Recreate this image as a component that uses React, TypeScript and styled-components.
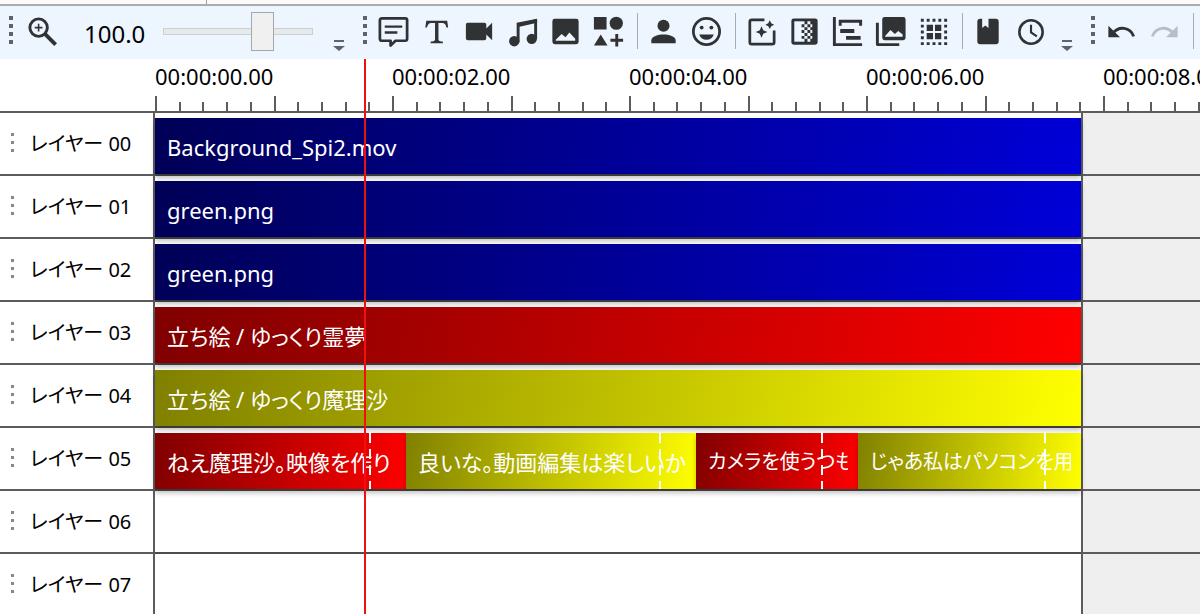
import React from "react";
import styled, { createGlobalStyle, css } from "styled-components";

const INK = "#303234";
const LINE = "#5c5c5c";

const GlobalStyle = createGlobalStyle`
  * { box-sizing: border-box; }
  body {
    margin: 0;
    background: #fff;
    color: #000;
    font-family: "Noto Sans", "Noto Sans CJK JP", sans-serif;
    font-size: 22px;
  }
`;

const Screen = styled.div`
  display: flex;
  flex-direction: column;
  height: 100vh;
  overflow: hidden;
`;

const PaneEdge = styled.div`
  flex: none;
  height: 6px;
  background: #fafafa;
  border-bottom: 2px solid #ababab;
  &::before {
    content: "";
    display: block;
    width: 206px;
    height: 4px;
    border-right: 1px solid #a0a0a0;
  }
`;

const Toolbar = styled.header`
  flex: none;
  display: flex;
  gap: 18px;
  height: 53px;
  padding-left: 9px;
  background: #edf5fe;
  overflow: hidden;
`;

const ToolGroup = styled.div`
  flex: none;
  display: flex;
  align-items: center;
  padding-bottom: 3px;
`;

const Grip = styled.span<{ $gap?: number }>`
  width: 4px;
  height: 28px;
  margin: 0 ${(p) => p.$gap ?? 5}px 2px 0;
  background: repeating-linear-gradient(#5e6368 0 4px, transparent 4px 8px);
`;

const Separator = styled.span`
  width: 1px;
  height: 36px;
  margin: 0 4px 0 7px;
  background: #a4acb4;
`;

const IconButton = styled.button`
  display: flex;
  align-items: center;
  justify-content: center;
  width: 43px;
  height: 44px;
  padding: 0;
  border: 0;
  background: none;
  color: ${INK};
  &:disabled { color: #b8bec4; }
  svg { display: block; width: 35px; height: 35px; }
`;

const OverflowButton = styled.button`
  display: flex;
  align-self: flex-end;
  width: 12px;
  height: 19px;
  margin-left: 8px;
  padding: 0;
  border: 0;
  background: none;
  color: #606468;
`;

const ZoomValue = styled.output`
  width: 66px;
  margin-left: 20px;
  padding-top: 4px;
  font-size: 24px;
`;

const ZoomSlider = styled.input`
  appearance: none;
  width: 150px;
  height: 40px;
  margin: 0 12px 0 13px;
  background: none;
  &::-webkit-slider-runnable-track {
    height: 7px;
    background: #e7eaea;
    border: 1px solid #cdd0d2;
  }
  &::-webkit-slider-thumb {
    appearance: none;
    width: 23px;
    height: 39px;
    margin-top: -17px;
    background: #f0f0f0;
    border: 1px solid #a4a8ac;
  }
`;

const Timeline = styled.main`
  position: relative;
  flex: none;
`;

const Ruler = styled.div`
  display: flex;
  height: 54px;
  padding-left: 155px;
  border-bottom: 2px solid ${LINE};
  overflow: hidden;
`;

const RulerCell = styled.div`
  flex: none;
  display: flex;
  flex-direction: column;
  justify-content: space-between;
  width: 237px;
  line-height: 34px;
`;

const Ticks = styled.div`
  display: flex;
  align-items: flex-end;
  height: 15px;
`;

const Tick = styled.span<{ $major: boolean }>`
  flex: 1;
  height: ${(p) => (p.$major ? 15 : 9)}px;
  border-left: 2px solid ${LINE};
`;

const Layer = styled.section`
  display: flex;
  height: 63px;
`;

const LayerHead = styled.div`
  flex: none;
  display: flex;
  align-items: center;
  gap: 16px;
  width: 155px;
  padding: 0 0 2px 11px;
  border-right: 2px solid ${LINE};
  border-bottom: 2px solid ${LINE};
`;

const LayerGrip = styled.span`
  width: 3px;
  height: 19px;
  background: repeating-linear-gradient(#888 0 3px, transparent 3px 8px);
`;

const jpText = css`
  font-feature-settings: "palt";
  white-space: nowrap;
`;

const LayerName = styled.span`
  ${jpText}
  font-size: 20px;
`;

const Track = styled.div`
  flex: none;
  display: flex;
  width: 926px;
  padding-top: 5px;
  border-bottom: 2px solid #4c4c4c;
`;

const Beyond = styled.div`
  flex: 1;
  background: #efefef;
  border-left: 2px solid ${LINE};
  border-bottom: 2px solid ${LINE};
`;

type Tone = "blue" | "red" | "yellow";

const tones: Record<Tone, string> = {
  blue: "#000056, #0000d8",
  red: "#800000, #ff0000",
  yellow: "#808000, #ffff00",
};

const ClipBox = styled.div<{ $tone: Tone; $length: number }>`
  position: relative;
  flex: none;
  width: ${(p) => p.$length}px;
  padding: 0 10px 0 12px;
  background: linear-gradient(100deg, ${(p) => tones[p.$tone]});
  box-shadow: 0 4px 5px rgba(0, 0, 0, 0.25);
  color: #fff;
  font-size: ${(p) => (p.$length < 250 ? 20 : 22)}px;
  line-height: 58px;
`;

const ClipText = styled.span`
  ${jpText}
  display: block;
  overflow: hidden;
`;

const VoiceEnd = styled.span<{ $at: number }>`
  position: absolute;
  top: 0;
  bottom: 0;
  left: ${(p) => p.$at}px;
  width: 2px;
  background: repeating-linear-gradient(#fff 0 10px, transparent 10px 16px);
`;

const Playhead = styled.div`
  position: absolute;
  top: 0;
  bottom: 0;
  left: 364px;
  width: 2px;
  background: #f01010;
`;

const icons: Record<string, React.ReactNode> = {
  zoom: (
    <g fill="none" stroke="currentColor">
      <circle cx="14" cy="14" r="9" strokeWidth="3" />
      <path d="M14 10v8M10 14h8" strokeWidth="1.6" />
      <path d="M20.500 20.500 31.500 31.500" strokeWidth="4" />
    </g>
  ),
  voice: (
    <g fill="none" stroke="currentColor">
      <path d="M6 4.500h24q2 0 2 2v19q0 2-2 2H20l-5 5v-5H6q-2 0-2-2v-19q0-2 2-2z" strokeWidth="2.800" strokeLinejoin="round" />
      <path d="M9 13h18M9 19h13" strokeWidth="2.400" />
    </g>
  ),
  text: (
    <path fill="currentColor" d="M7.500 7h21.500l1 7h-1.700q-.8-4.800-4.300-4.800h-4V26q0 2.200 3 2.200h1.500v1.800H12v-1.800h1.500q3 0 3-2.200V9.200h-4q-3.500 0-4.300 4.800H6.500z" />
  ),
  video: <path fill="currentColor" d="M6 9h17q2 0 2 2v4l6-6v18l-6-6v4q0 2-2 2H6q-2 0-2-2V11q0-2 2-2z" />,
  music: (
    <g fill="currentColor">
      <path d="M12 9 33 5v4L15 13v16h-3z" />
      <path d="M30 5.500h3V26h-3z" />
      <circle cx="9.500" cy="28" r="5.300" />
      <circle cx="27.500" cy="25.500" r="5.300" />
    </g>
  ),
  image: (
    <path fill="currentColor" fillRule="evenodd" d="M7 5h22q2.500 0 2.500 2.500v21q0 2.500-2.500 2.500H7q-2.500 0-2.500-2.500v-21Q4.500 5 7 5zM8 27.500h20v-2l-6-6.500-4 5-4-3.500-6 6z" />
  ),
  shapes: (
    <g fill="currentColor">
      <path d="M3 3h13v13H3zM10 21l7 11.500H3z" />
      <circle cx="26" cy="9.500" r="6.800" />
      <path d="M25 20.500h3v5h5v3h-5v5h-3v-5h-5v-3h5z" />
    </g>
  ),
  person: (
    <g fill="currentColor">
      <circle cx="18" cy="12" r="6.200" />
      <path d="M5.500 30v-3c0-4 7-6 12.500-6s12.500 2 12.500 6v3z" />
    </g>
  ),
  face: (
    <g fill="currentColor">
      <circle cx="18" cy="18" r="13.500" fill="none" stroke="currentColor" strokeWidth="2.800" />
      <circle cx="13" cy="14" r="2" />
      <circle cx="23" cy="14" r="2" />
      <path d="M10.500 21h15q-2 5.500-7.500 5.500t-7.500-5.500z" />
    </g>
  ),
  effect: (
    <g fill="currentColor">
      <path d="M21 6H8q-2 0-2 2v21q0 2 2 2h21q2 0 2-2V17" fill="none" stroke="currentColor" strokeWidth="2.800" />
      <path d="M18 12.500l1.800 4.200 4.200 1.800-4.200 1.800-1.800 4.200-1.800-4.200-4.200-1.800 4.200-1.800zM26.500 6.500l1.500 3 3 1.500-3 1.500-1.500 3-1.500-3-3-1.500 3-1.500z" />
    </g>
  ),
  transition: (
    <g>
      <path fill="currentColor" d="M7 4.500h22q2.500 0 2.500 2.500v22q0 2.500-2.500 2.500H7q-2.500 0-2.500-2.500V7q0-2.500 2.500-2.500z" />
      <path fill="#edf5fe" d="M7.500 7.500H18v21H7.500z" />
      <path fill="currentColor" d="M15 10.500h3v3h-3zM15 16.500h3v3h-3zM15 22.500h3v3h-3z" />
      <path fill="#edf5fe" d="M18 10.500h3v3h-3zM18 16.500h3v3h-3zM18 22.500h3v3h-3zM21 7.500h3v3h-3zM21 13.500h3v3h-3zM21 19.500h3v3h-3zM21 25.500h3v3h-3zM24 10.500h2v3h-2zM24 16.500h2v3h-2zM24 22.500h2v3h-2z" />
    </g>
  ),
  group: (
    <g fill="currentColor">
      <path d="M3 3h3v27h27v3H3z" />
      <path d="M9 6h24v6h-3V9H12v3H9zM10.500 15.500H25v4H10.500zM16.500 22.500h15v4h-15z" />
    </g>
  ),
  stack: (
    <path fill="currentColor" fillRule="evenodd" d="M12 3h19q2.500 0 2.500 2.500v19Q33.500 27 31 27H12q-2.500 0-2.500-2.500v-19Q9.500 3 12 3zM12.500 23.500h18V21L26 17.500l-3.500 3-4.500-4-5.500 6zM3 9h3v21h21v3H5q-2 0-2-2z" />
  ),
  frames: (
    <g fill="currentColor">
      <path d="M11 11h6.500v6.500H11zM19.500 11H26v6.500h-6.500zM11 19.500h6.500V26H11zM19.500 19.500H26V26h-6.500z" />
      <path d="M6.500 5v27M30.500 5v27M5 6.500h27M5 30.500h27" fill="none" stroke="currentColor" strokeWidth="3" strokeDasharray="3 3" />
    </g>
  ),
  book: (
    <path fill="currentColor" fillRule="evenodd" d="M9.500 5h16q3 0 3 3v20q0 3-3 3h-16q-3 0-3-3V8q0-3 3-3zM11.500 5v9.500l3.200-2.700 3.300 2.700V5z" />
  ),
  clock: (
    <g fill="none" stroke="currentColor">
      <circle cx="17.500" cy="18.500" r="12" strokeWidth="2.600" />
      <path d="M17.500 11v8l6 4" strokeWidth="2.200" />
    </g>
  ),
  undo: (
    <g>
      <path fill="currentColor" d="M4.500 12v12h12z" />
      <path d="M9 20c6-8 18-7 21.500 3" fill="none" stroke="currentColor" strokeWidth="3" />
    </g>
  ),
  redo: (
    <g>
      <path fill="currentColor" d="M31.500 12v12h-12z" />
      <path d="M27 20c-6-8-18-7-21.500 3" fill="none" stroke="currentColor" strokeWidth="3" />
    </g>
  ),
};

function Tool({ icon, label, disabled }: { icon: string; label: string; disabled?: boolean }) {
  return (
    <IconButton type="button" aria-label={label} disabled={disabled}>
      <svg viewBox="0 0 36 36" aria-hidden="true">{icons[icon]}</svg>
    </IconButton>
  );
}

function More() {
  return (
    <OverflowButton type="button" aria-label="More">
      <svg width="12" height="14" viewBox="0 0 12 14" aria-hidden="true">
        <path fill="currentColor" d="M1 3h10v2H1zM0 9h12l-6 5z" />
      </svg>
    </OverflowButton>
  );
}

interface Clip {
  text: string;
  tone: Tone;
  length: number;
  voiceEnd?: number;
}

const layers: Clip[][] = [
  [{ text: "Background_Spi2.mov", tone: "blue", length: 926 }],
  [{ text: "green.png", tone: "blue", length: 926 }],
  [{ text: "green.png", tone: "blue", length: 926 }],
  [{ text: "立ち絵 / ゆっくり霊夢", tone: "red", length: 926 }],
  [{ text: "立ち絵 / ゆっくり魔理沙", tone: "yellow", length: 926 }],
  [
    { text: "ねえ魔理沙。映像を作り", tone: "red", length: 251, voiceEnd: 214 },
    { text: "良いな。動画編集は楽しいか", tone: "yellow", length: 290, voiceEnd: 253 },
    { text: "カメラを使うつも", tone: "red", length: 162, voiceEnd: 125 },
    { text: "じゃあ私はパソコンを用", tone: "yellow", length: 223, voiceEnd: 186 },
  ],
  [],
  [],
];

const times = ["00:00:00.00", "00:00:02.00", "00:00:04.00", "00:00:06.00", "00:00:08.00"];

export default function App() {
  return (
    <Screen>
      <GlobalStyle />
      <PaneEdge />
      <Toolbar>
        <ToolGroup>
          <Grip $gap={8} />
          <Tool icon="zoom" label="Zoom in" />
          <ZoomValue htmlFor="zoom">100.0</ZoomValue>
          <ZoomSlider id="zoom" type="range" min={0} max={150} defaultValue={104} aria-label="Zoom" />
          <More />
        </ToolGroup>
        <ToolGroup>
          <Grip />
          <Tool icon="voice" label="Voice" />
          <Tool icon="text" label="Text" />
          <Tool icon="video" label="Video" />
          <Tool icon="music" label="Audio" />
          <Tool icon="image" label="Image" />
          <Tool icon="shapes" label="Shapes" />
          <Separator />
          <Tool icon="person" label="Character" />
          <Tool icon="face" label="Expression" />
          <Separator />
          <Tool icon="effect" label="Effect" />
          <Tool icon="transition" label="Transition" />
          <Tool icon="group" label="Group control" />
          <Tool icon="stack" label="Screen copy" />
          <Tool icon="frames" label="Frame buffer" />
          <Separator />
          <Tool icon="book" label="Templates" />
          <Tool icon="clock" label="History" />
          <More />
        </ToolGroup>
        <ToolGroup>
          <Grip />
          <Tool icon="undo" label="Undo" />
          <Tool icon="redo" label="Redo" disabled />
          <Separator />
        </ToolGroup>
      </Toolbar>
      <Timeline>
        <Ruler>
          {times.map((time) => (
            <RulerCell key={time}>
              {time}
              <Ticks>
                {Array.from({ length: 10 }, (_, i) => (
                  <Tick key={i} $major={i % 5 === 0} />
                ))}
              </Ticks>
            </RulerCell>
          ))}
        </Ruler>
        {layers.map((clips, index) => (
          <Layer key={index}>
            <LayerHead>
              <LayerGrip />
              <LayerName>レイヤー 0{index}</LayerName>
            </LayerHead>
            <Track>
              {clips.map((clip) => (
                <ClipBox key={clip.text} $tone={clip.tone} $length={clip.length}>
                  <ClipText>{clip.text}</ClipText>
                  {clip.voiceEnd !== undefined && <VoiceEnd $at={clip.voiceEnd} />}
                </ClipBox>
              ))}
            </Track>
            <Beyond />
          </Layer>
        ))}
        <Playhead />
      </Timeline>
    </Screen>
  );
}
